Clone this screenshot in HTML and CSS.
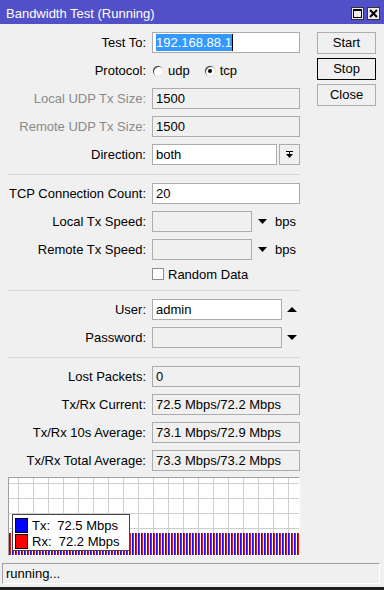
FILE: index.html
```html
<!DOCTYPE html>
<html lang="en">
<head>
    <meta charset="UTF-8">
    <title>Bandwidth Test (Running)</title>
    <link rel="stylesheet" href="styles.css">
</head>
<body>
    <div class="window">
        <div class="titlebar">
            <span class="title">Bandwidth Test (Running)</span>
            <div class="tbButtons">
                <span class="tbBtn">
                    <svg width="9" height="9" viewBox="0 0 9 9"><rect x="0.5" y="0.5" width="8" height="8" fill="none" stroke="#000"/><rect x="0" y="0" width="9" height="2" fill="#000"/></svg>
                </span>
                <span class="tbBtn">
                    <svg width="9" height="9" viewBox="0 0 9 9"><path d="M1 1L8 8M8 1L1 8" stroke="#000" stroke-width="2"/></svg>
                </span>
            </div>
        </div>

        <div class="main">
            <div class="left">
                <div class="row">
                    <span class="lbl">Test To:</span>
                    <div class="field w148"><span class="hl">192.168.88.1</span></div>
                </div>
                <div class="row">
                    <span class="lbl">Protocol:</span>
                    <span class="radio"></span><span class="opt">udp</span>
                    <span class="radio on"></span><span>tcp</span>
                </div>
                <div class="row">
                    <span class="lbl dim">Local UDP Tx Size:</span>
                    <div class="field off w148">1500</div>
                </div>
                <div class="row">
                    <span class="lbl dim">Remote UDP Tx Size:</span>
                    <div class="field off w148">1500</div>
                </div>
                <div class="row">
                    <span class="lbl">Direction:</span>
                    <div class="field w125">both</div>
                    <span class="dropBtn">
                        <svg width="7" height="7" viewBox="0 0 7 7"><rect x="0" y="0" width="7" height="1"/><rect x="3" y="1" width="1" height="2"/><path d="M0 3h7l-3.5 4z"/></svg>
                    </span>
                </div>

                <div class="sep"></div>

                <div class="row">
                    <span class="lbl">TCP Connection Count:</span>
                    <div class="field w148">20</div>
                </div>
                <div class="row">
                    <span class="lbl">Local Tx Speed:</span>
                    <div class="field off w100"></div>
                    <svg class="arrow" width="9" height="5" viewBox="0 0 9 5"><path d="M0 0h9l-4.5 5z"/></svg>
                    <span class="unit">bps</span>
                </div>
                <div class="row">
                    <span class="lbl">Remote Tx Speed:</span>
                    <div class="field off w100"></div>
                    <svg class="arrow" width="9" height="5" viewBox="0 0 9 5"><path d="M0 0h9l-4.5 5z"/></svg>
                    <span class="unit">bps</span>
                </div>
                <div class="row short">
                    <span class="lbl"></span>
                    <span class="check"></span>
                    <span>Random Data</span>
                </div>

                <div class="sep"></div>

                <div class="row">
                    <span class="lbl">User:</span>
                    <div class="field w130">admin</div>
                    <svg class="arrow2" width="10" height="5" viewBox="0 0 10 5"><path d="M0 5h10L5 0z"/></svg>
                </div>
                <div class="row">
                    <span class="lbl">Password:</span>
                    <div class="field off w130"></div>
                    <svg class="arrow2" width="10" height="5" viewBox="0 0 10 5"><path d="M0 0h10L5 5z"/></svg>
                </div>

                <div class="sep"></div>

                <div class="row">
                    <span class="lbl">Lost Packets:</span>
                    <div class="field off w148">0</div>
                </div>
                <div class="row">
                    <span class="lbl">Tx/Rx Current:</span>
                    <div class="field off w148">72.5 Mbps/72.2 Mbps</div>
                </div>
                <div class="row">
                    <span class="lbl">Tx/Rx 10s Average:</span>
                    <div class="field off w148">73.1 Mbps/72.9 Mbps</div>
                </div>
                <div class="row">
                    <span class="lbl">Tx/Rx Total Average:</span>
                    <div class="field off w148">73.3 Mbps/73.2 Mbps</div>
                </div>

                <!-- traffic graph -->
                <div class="graph">
                    <div class="bars"></div>
                    <div class="legend">
                        <div class="lgRow"><span class="swatch tx"></span><span>Tx:  72.5 Mbps</span></div>
                        <div class="lgRow"><span class="swatch rx"></span><span>Rx:  72.2 Mbps</span></div>
                    </div>
                </div>
            </div>

            <div class="buttons">
                <div class="btn">Start</div>
                <div class="btn focus">Stop</div>
                <div class="btn">Close</div>
            </div>
        </div>

        <div class="status">running...</div>
    </div>
</body>
</html>
```

FILE: styles.css
```css
body {
    margin: 0;
    font-family: "Liberation Sans", Arial, sans-serif;
    font-size: 13px;
    color: #000;
}

.window {
    width: 384px;
    height: 590px;
    box-sizing: border-box;
    background-color: #f0f0f0;
    border-bottom: 3px solid #1e1e1e;
    overflow: hidden;
}

.titlebar {
    height: 24px;
    background-color: #5250c9;
    color: #fff;
    display: flex;
    align-items: flex-start;
    padding-left: 6px;
}

.title {
    line-height: 28px;
}

.tbButtons {
    margin-left: auto;
    margin-right: 4px;
    margin-top: 7px;
    display: flex;
    gap: 3px;
}

.tbBtn {
    width: 13px;
    height: 13px;
    box-sizing: border-box;
    border: 1px solid #333;
    background-color: #ececec;
    display: flex;
    align-items: center;
    justify-content: center;
}

.main {
    display: flex;
    padding: 8px 0 0 8px;
}

.left {
    width: 292px;
    display: flex;
    flex-direction: column;
    gap: 7px;
}

.row {
    display: flex;
    align-items: center;
    height: 21px;
    white-space: pre;
}

.row.short {
    height: 14px;
}

.lbl {
    flex: none;
    width: 138px;
    margin-right: 6px;
    text-align: right;
}

.lbl.dim {
    color: #8a8a8a;
}

.field {
    height: 21px;
    box-sizing: border-box;
    border: 1px solid #acacac;
    background-color: #fff;
    padding-left: 3px;
    line-height: 19px;
    overflow: hidden;
}

.field.off {
    background-color: #f0f0f0;
}

.w148 { width: 148px; }
.w130 { width: 130px; }
.w125 { width: 125px; }
.w100 { width: 100px; }

.hl {
    display: inline-block;
    line-height: 17px;
    background-color: #3399ff;
    color: #fff;
    border-right: 1px solid #000;
    vertical-align: top;
    margin-top: 1px;
}

.radio {
    width: 10px;
    height: 10px;
    border-radius: 50%;
    background-color: #fff;
    box-shadow: inset 1px 1px 0 #444, 0 0 0 1px #e6e6e6;
    margin: 1px 5px 0 1px;
    display: flex;
    align-items: center;
    justify-content: center;
}

.radio.on::after {
    content: "";
    width: 4px;
    height: 4px;
    border-radius: 50%;
    background-color: #000;
}

.opt {
    margin-right: 14px;
}

.dropBtn {
    width: 21px;
    height: 21px;
    box-sizing: border-box;
    margin-left: 2px;
    border: 1px solid #acacac;
    background-color: #f0f0f0;
    display: flex;
    align-items: center;
    justify-content: center;
}

.arrow {
    margin-left: 6px;
}

.arrow2 {
    margin-left: 5px;
}

.unit {
    margin-left: 8px;
}

.check {
    width: 12px;
    height: 12px;
    box-sizing: border-box;
    border: 1px solid #8f8f8f;
    background-color: #fff;
    margin-right: 4px;
}

.sep {
    height: 1px;
    background-color: #d8d8d8;
    margin: 2px 0 1px;
}

.graph {
    margin-top: -1px;
    height: 79px;
    box-sizing: border-box;
    position: relative;
    border: 1px solid;
    border-color: #a0a0a0 #fff #fff #a0a0a0;
    background-color: #fff;
    background-image:
        linear-gradient(to right, #cfcfcf 1px, transparent 1px),
        linear-gradient(to bottom, #cfcfcf 1px, transparent 1px);
    background-size: 15px 15px;
    background-position: 9px 5px;
    display: flex;
    align-items: flex-end;
}

.bars {
    width: 100%;
    height: 22px;
    background-image: repeating-linear-gradient(to right, #1010ff 0 1px, #f01010 1px 2px, #fff 2px 3px);
}

.legend {
    position: absolute;
    left: 3px;
    top: 36px;
    width: 118px;
    height: 37px;
    box-sizing: border-box;
    border: 1px solid #444;
    background-color: #fff;
    padding: 2px;
}

.lgRow {
    display: flex;
    align-items: center;
    height: 16px;
    white-space: pre;
}

.swatch {
    width: 13px;
    height: 15px;
    box-sizing: border-box;
    border: 1px solid #000;
    margin-right: 4px;
}

.swatch.tx { background-color: #0000ff; }
.swatch.rx { background-color: #ff0000; }

.buttons {
    width: 59px;
    margin-left: 17px;
    display: flex;
    flex-direction: column;
    gap: 4px;
}

.btn {
    height: 22px;
    box-sizing: border-box;
    border: 1px solid #adadad;
    background-color: #f0f0f0;
    text-align: center;
    line-height: 20px;
}

.btn.focus {
    border-color: #000;
}

.status {
    margin: 7px 4px 0 2px;
    height: 21px;
    box-sizing: border-box;
    border: 1px solid;
    border-color: #a0a0a0 #fff #fff #a0a0a0;
    padding-left: 3px;
    line-height: 19px;
}
```
